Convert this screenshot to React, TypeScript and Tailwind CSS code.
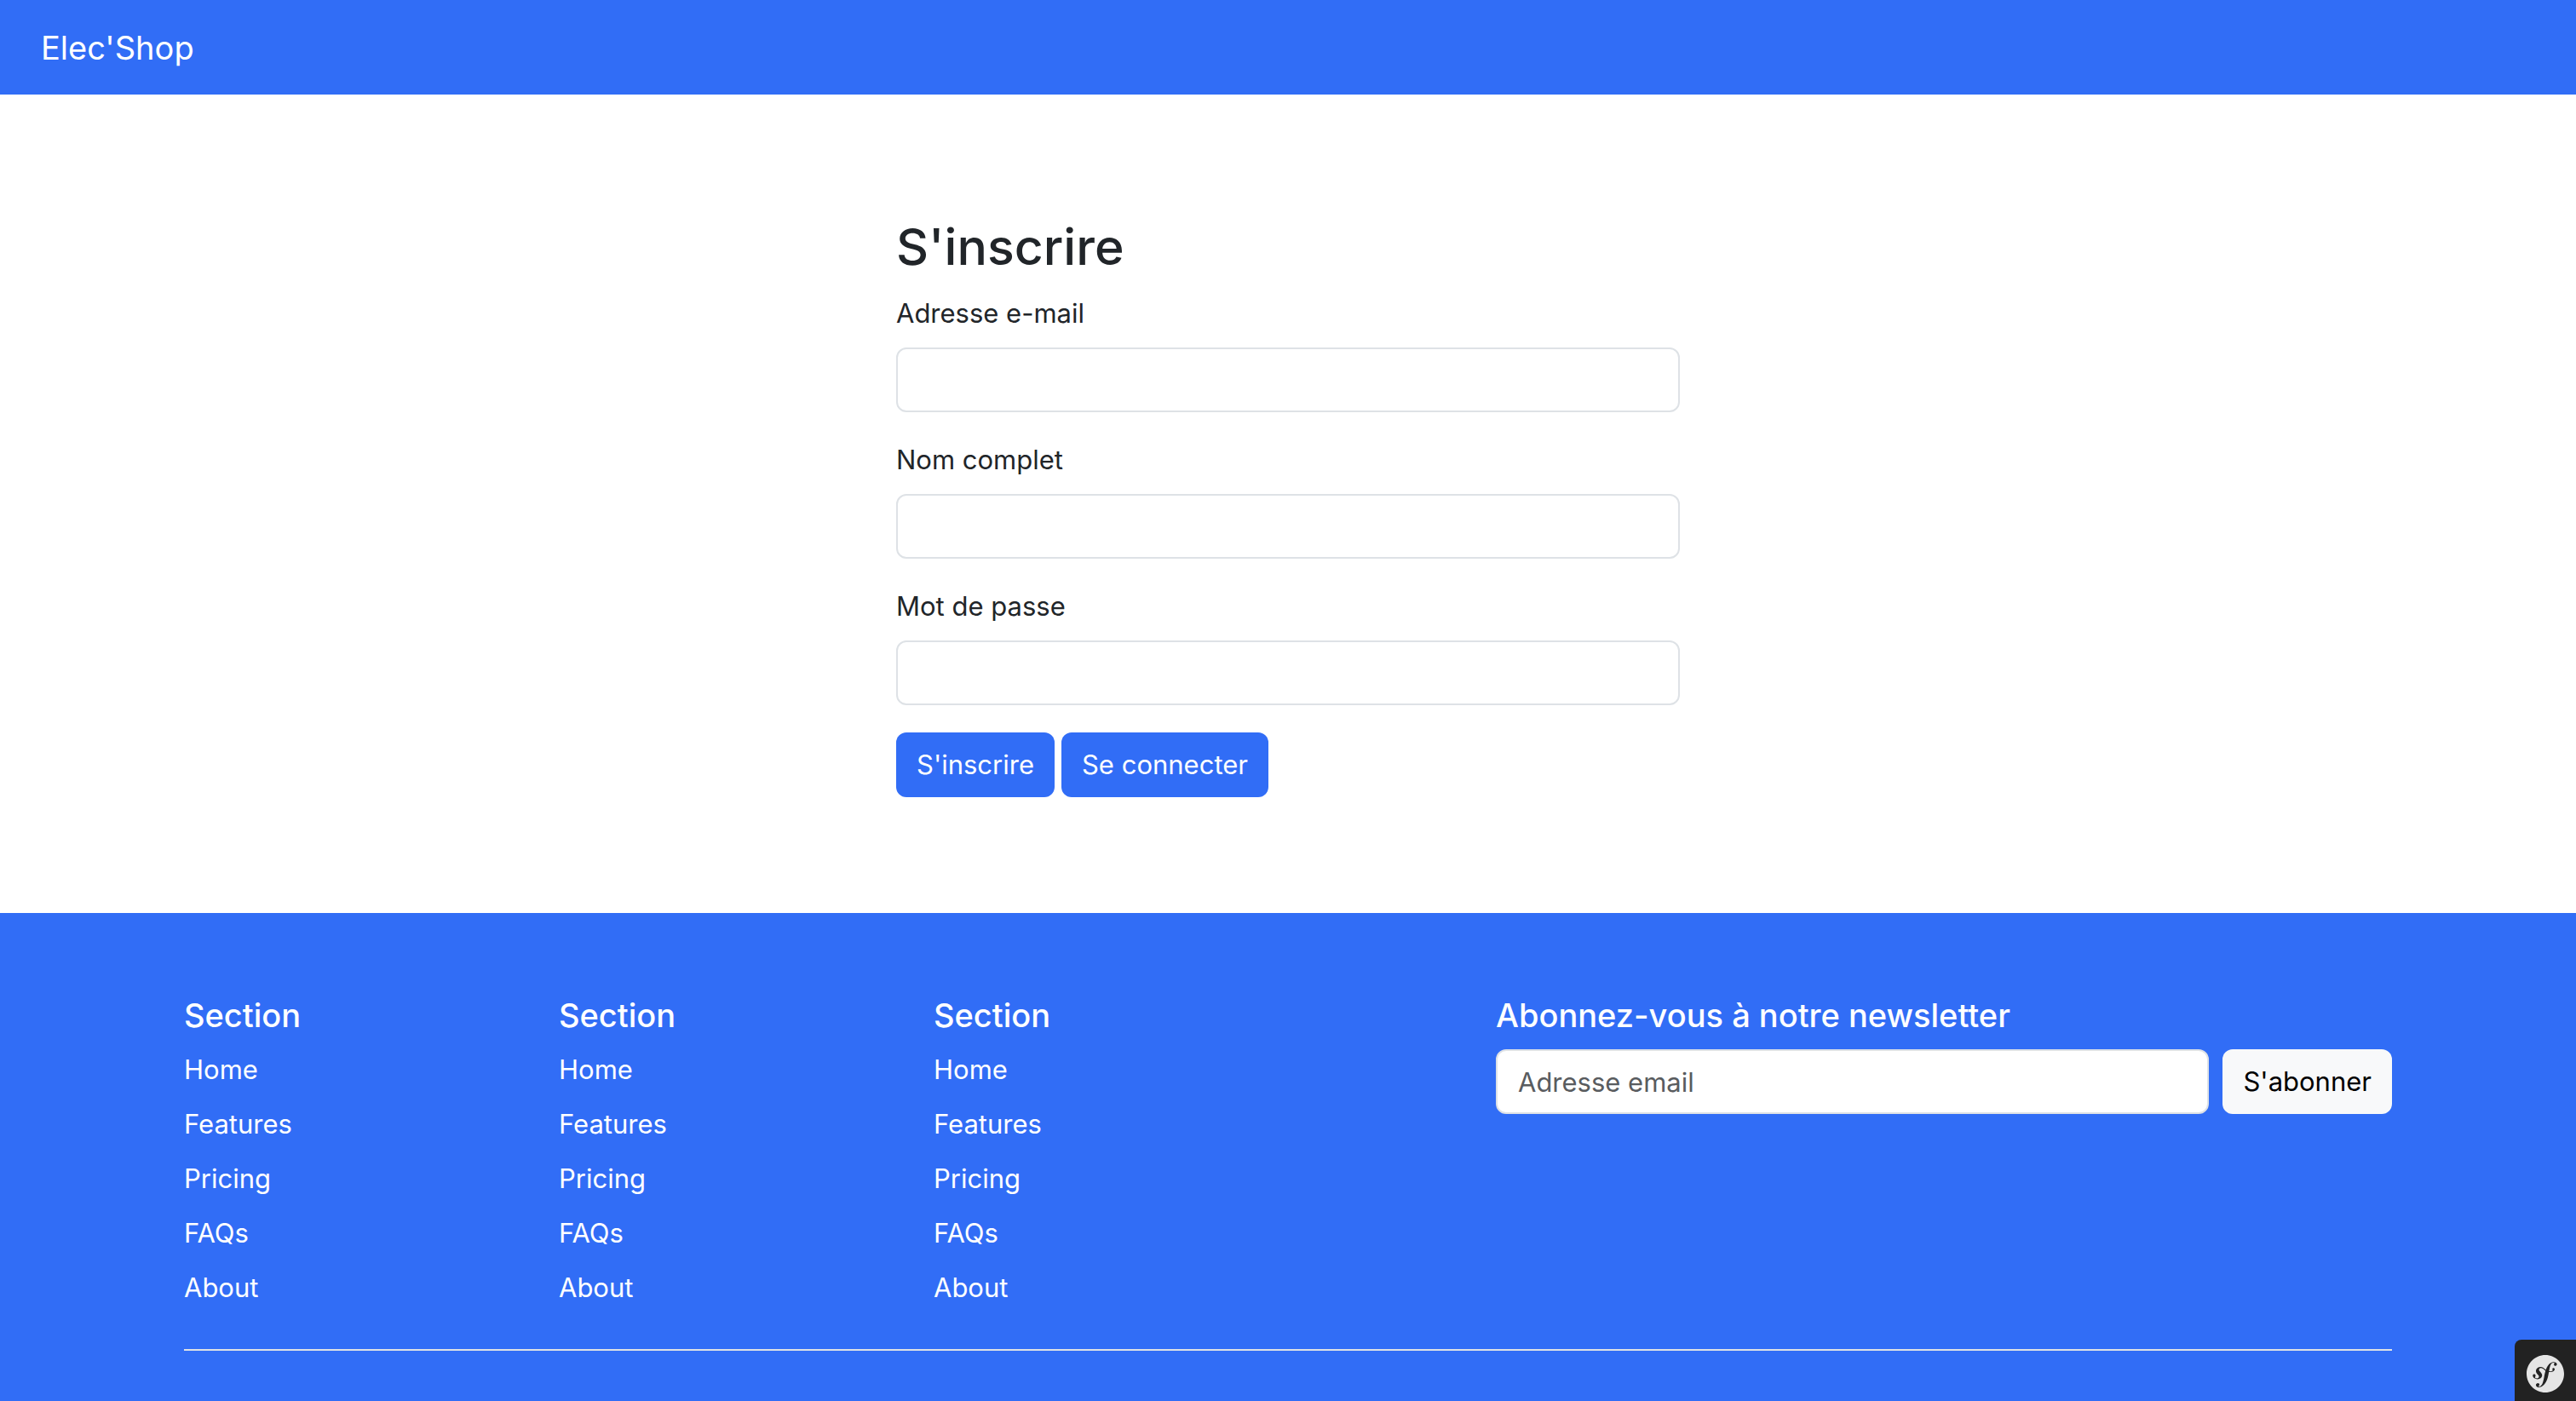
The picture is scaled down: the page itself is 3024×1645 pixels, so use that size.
import type { InputHTMLAttributes } from "react";
import { SiSymfony } from "react-icons/si";

const links = ["Home", "Features", "Pricing", "FAQs", "About"];

const inputClass =
  "block h-[76px] w-full min-w-0 rounded-xl border-2 border-[#dee2e6] bg-white px-6 placeholder:text-[#595c5f] placeholder:opacity-100";

function Field({ id, label, ...rest }: { id: string; label: string } & InputHTMLAttributes<HTMLInputElement>) {
  return (
    <div className="mb-8">
      <label htmlFor={id} className="mb-4 block">
        {label}
      </label>
      <input id={id} className={inputClass} {...rest} />
    </div>
  );
}

function LinkColumn() {
  return (
    <nav className="col-span-2 text-white">
      <h5 className="mb-4 text-[38px] leading-[48px] font-medium">Section</h5>
      <ul className="flex flex-col">
        {links.map((link) => (
          <li key={link} className="mb-4">
            <a href="#" className="block">
              {link}
            </a>
          </li>
        ))}
      </ul>
    </nav>
  );
}

export default function App() {
  return (
    <div className="flex min-h-screen flex-col bg-white font-['Inter',sans-serif] text-[31px] leading-[48px] text-[#212529]">
      <header className="flex h-[111px] items-center bg-[#316df6] px-12">
        <a href="#" className="text-[38px] leading-[60px] text-white">
          Elec'Shop
        </a>
      </header>

      <main className="mx-auto w-full max-w-[920px] pt-[140px] pb-[136px]">
        <form>
          <h1 className="mb-4 text-[59px] leading-[77px] font-medium">S'inscrire</h1>
          <Field id="email" label="Adresse e-mail" type="email" autoComplete="email" />
          <Field id="name" label="Nom complet" type="text" autoComplete="name" />
          <Field id="password" label="Mot de passe" type="password" autoComplete="new-password" />
          <div className="flex gap-2">
            <button type="submit" className="h-[76px] rounded-xl bg-[#316df6] px-6 text-white">
              S'inscrire
            </button>
            <a href="#" className="flex h-[76px] items-center rounded-xl bg-[#316df6] px-6 text-white">
              Se connecter
            </a>
          </div>
        </form>
      </main>

      <footer className="flex-1 bg-[#316df6] pt-24">
        <div className="mx-auto max-w-[2640px] px-6">
          <div className="grid grid-cols-12 gap-x-12">
            <LinkColumn />
            <LinkColumn />
            <LinkColumn />
            <form className="col-span-5 col-start-8">
              <h5 className="mb-4 text-[38px] leading-[48px] font-medium text-white">
                <label htmlFor="newsletter">Abonnez-vous à notre newsletter</label>
              </h5>
              <div className="flex gap-4">
                <input id="newsletter" type="text" placeholder="Adresse email" className={inputClass} />
                <button type="button" className="h-[76px] shrink-0 rounded-xl bg-[#f8f9fa] px-6 text-black">
                  S'abonner
                </button>
              </div>
            </form>
          </div>
          <hr className="mt-8 border-t-2 border-[#dee2e6]" />
        </div>
      </footer>

      <button
        type="button"
        aria-label="Symfony"
        className="fixed right-0 bottom-0 flex size-[72px] items-center justify-center rounded-tl-lg bg-[#222222] text-[#e5e5e5]"
      >
        <SiSymfony className="mt-2 size-11" />
      </button>
    </div>
  );
}
